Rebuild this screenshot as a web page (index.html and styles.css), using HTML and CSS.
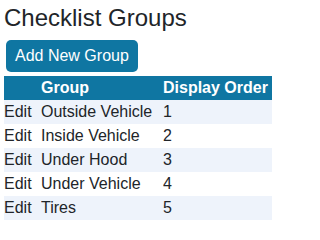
FILE: index.html
```html
<!DOCTYPE html>
<html>
<head>
<meta charset="utf-8">
<link rel="stylesheet" href="styles.css">
</head>
<body>
<div class="page">
  <h1 class="title">Checklist Groups</h1>
  <button class="btn">Add New Group</button>
  <div class="table-wrap">
    <table class="grid">
      <thead>
        <tr><th class="c1"></th><th class="c2">Group</th><th class="c3">Display Order</th></tr>
      </thead>
      <tbody>
        <tr><td>Edit</td><td>Outside Vehicle</td><td>1</td></tr>
        <tr><td>Edit</td><td>Inside Vehicle</td><td>2</td></tr>
        <tr><td>Edit</td><td>Under Hood</td><td>3</td></tr>
        <tr><td>Edit</td><td>Under Vehicle</td><td>4</td></tr>
        <tr><td>Edit</td><td>Tires</td><td>5</td></tr>
      </tbody>
    </table>
  </div>
</div>
</body>
</html>
```
FILE: styles.css
```css
html, body {
  margin: 0;
  padding: 0;
  overflow: hidden;
  background: #fff;
}
.page {
  width: 268px;
  padding: 3px 0 0 4px;
  font-family: "Liberation Sans", Arial, sans-serif;
  color: #212529;
  overflow: hidden;
}
.title {
  margin: 0;
  font-size: 24px;
  font-weight: normal;
  line-height: 29px;
}
.btn {
  display: block;
  margin: 8px 0 4px 2px;
  height: 32px;
  padding: 0 9px;
  border: none;
  border-radius: 5px;
  background: #0f76a2;
  color: #fff;
  font-family: "Liberation Sans", Arial, sans-serif;
  font-size: 16px;
}
.table-wrap {
  overflow: hidden;
}
.grid {
  border-collapse: collapse;
  table-layout: fixed;
  width: 289px;
  font-size: 16px;
}
.grid th, .grid td {
  padding: 0;
  height: 24px;
  text-align: left;
  white-space: nowrap;
  overflow: hidden;
}
.grid thead tr {
  background: #0f76a2;
  color: #fff;
}
.grid th {
  font-weight: bold;
}
.c1 { width: 37px; }
.c2 { width: 122px; }
.c3 { width: 130px; }
.grid tbody tr:nth-child(odd) {
  background: #eef3fb;
}
```
